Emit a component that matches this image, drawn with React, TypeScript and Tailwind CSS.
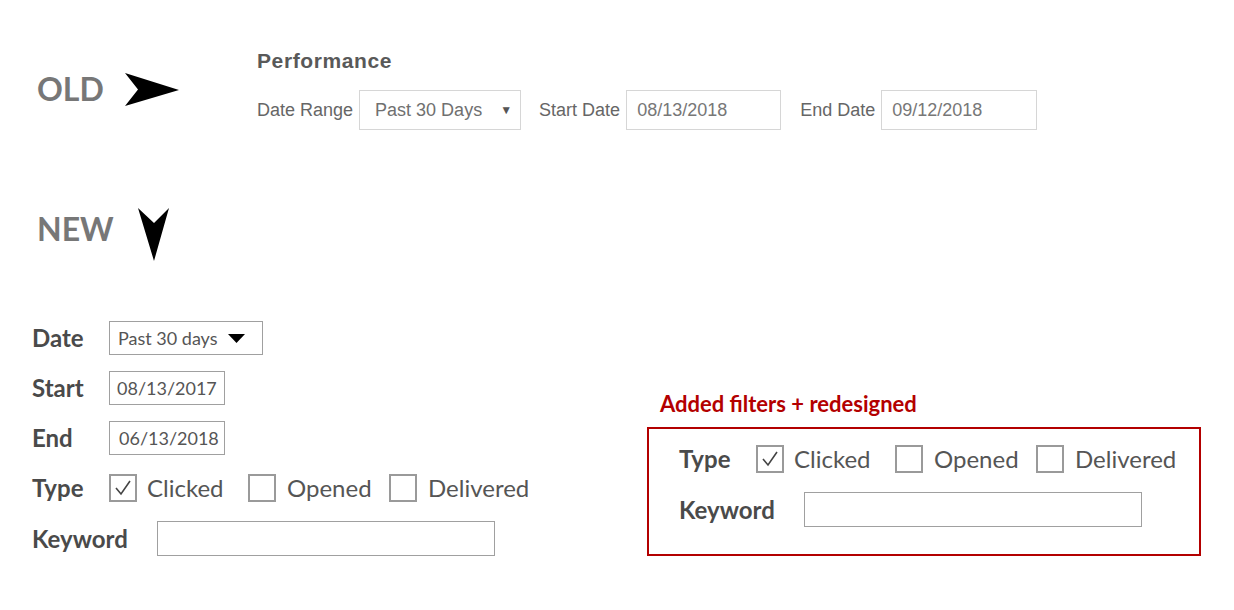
import React from "react";

const lato = { fontFamily: "Lato, 'Open Sans', sans-serif" };
const arial = { fontFamily: "'Liberation Sans', Arial, sans-serif" };

function Check({ checked }: { checked?: boolean }) {
  return (
    <div className="w-[28px] h-[28px] border-2 border-[#9a9a9a] flex items-center justify-center shrink-0">
      {checked && (
        <svg width="20" height="20" viewBox="0 0 20 20">
          <polyline points="3,10 8,16 17,3" fill="none" stroke="#444" strokeWidth="1.6" />
        </svg>
      )}
    </div>
  );
}

function TypeRow() {
  return (
    <div className="flex items-center h-[34px]">
      <div className="w-[77px] text-[24px] font-bold text-[#4a4a4a]">Type</div>
      <Check checked />
      <span className="ml-[10px] text-[24px] text-[#555] w-[101px]">Clicked</span>
      <Check />
      <span className="ml-[11px] text-[24px] text-[#555] w-[102px]">Opened</span>
      <Check />
      <span className="ml-[11px] text-[24px] text-[#555]">Delivered</span>
    </div>
  );
}

function KeywordRow() {
  return (
    <div className="flex items-center h-[35px]">
      <div className="w-[125px] text-[24px] font-bold text-[#4a4a4a]">Keyword</div>
      <div className="w-[338px] h-[35px] border border-[#a0a0a0]" />
    </div>
  );
}

export default function App() {
  return (
    <div className="w-[1234px] h-[610px] bg-white overflow-hidden" style={lato}>
      {/* OLD */}
      <div className="flex pt-[50px]">
        <div className="w-[257px] pl-[37px] flex items-center pt-[21px] self-start">
          <span className="text-[32px] leading-[32px] font-bold text-[#777]">OLD</span>
          <svg className="ml-[21px] mt-[2px]" width="55" height="33" viewBox="0 0 55 33">
            <polygon points="0,0 54,17 0,33 13,16.5" fill="#000" />
          </svg>
        </div>
        <div style={arial}>
          <div className="text-[21px] leading-[22px] font-bold text-[#595959] tracking-[0.6px]">Performance</div>
          <div className="flex items-center mt-[18px] text-[18px] text-[#666]">
            <span>Date Range</span>
            <div className="ml-[6px] w-[162px] h-[40px] border border-[#d6d6d6] flex items-center pl-[15px] pr-[8px] justify-between text-[#707070]">
              <span>Past 30 Days</span>
              <span className="text-[12px] text-[#555]">▼</span>
            </div>
            <span className="ml-[18px]">Start Date</span>
            <div className="ml-[6px] w-[155px] h-[40px] border border-[#d6d6d6] flex items-center pl-[10px] text-[#777]">08/13/2018</div>
            <span className="ml-[19px]">End Date</span>
            <div className="ml-[6px] w-[156px] h-[40px] border border-[#d6d6d6] flex items-center pl-[10px] text-[#777]">09/12/2018</div>
          </div>
        </div>
      </div>

      {/* NEW */}
      <div className="flex items-start pl-[37px] mt-[78px]">
        <span className="text-[32px] leading-[32px] font-bold text-[#777] mt-[5px]">NEW</span>
        <svg className="ml-[24px]" width="32" height="54" viewBox="0 0 32 54">
          <polygon points="0,0 16,15 31,0 16,53" fill="#000" />
        </svg>
      </div>

      <div className="flex items-start mt-[59px]">
        {/* left form */}
        <div className="pl-[32px] w-[647px] flex flex-col gap-[16px]">
          <div className="flex items-center h-[34px]">
            <div className="w-[77px] text-[24px] font-bold text-[#4a4a4a]">Date</div>
            <div className="w-[154px] h-[34px] border border-[#a0a0a0] flex items-center pl-[8px] text-[18px] text-[#555]">
              <span>Past 30 days</span>
              <svg className="ml-[10px]" width="17" height="9" viewBox="0 0 17 9">
                <polygon points="0,0 17,0 8.5,9" fill="#000" />
              </svg>
            </div>
          </div>
          <div className="flex items-center h-[34px]">
            <div className="w-[77px] text-[24px] font-bold text-[#4a4a4a]">Start</div>
            <div className="w-[116px] h-[34px] border border-[#a0a0a0] flex items-center pl-[7px] text-[18px] text-[#555]">08/13/2017</div>
          </div>
          <div className="flex items-center h-[34px]">
            <div className="w-[77px] text-[24px] font-bold text-[#4a4a4a]">End</div>
            <div className="w-[116px] h-[34px] border border-[#a0a0a0] flex items-center pl-[9px] text-[18px] text-[#555]">06/13/2018</div>
          </div>
          <TypeRow />
          <KeywordRow />
        </div>

        {/* right */}
        <div className="mt-[71px]">
          <div className="pl-[13px] text-[22px] leading-[24px] font-bold text-[#b30000]">Added filters + redesigned</div>
          <div className="mt-[11px] w-[554px] h-[129px] border-2 border-[#b30000] pl-[30px] pt-[13px] flex flex-col gap-[16px]">
            <TypeRow />
            <KeywordRow />
          </div>
        </div>
      </div>
    </div>
  );
}
